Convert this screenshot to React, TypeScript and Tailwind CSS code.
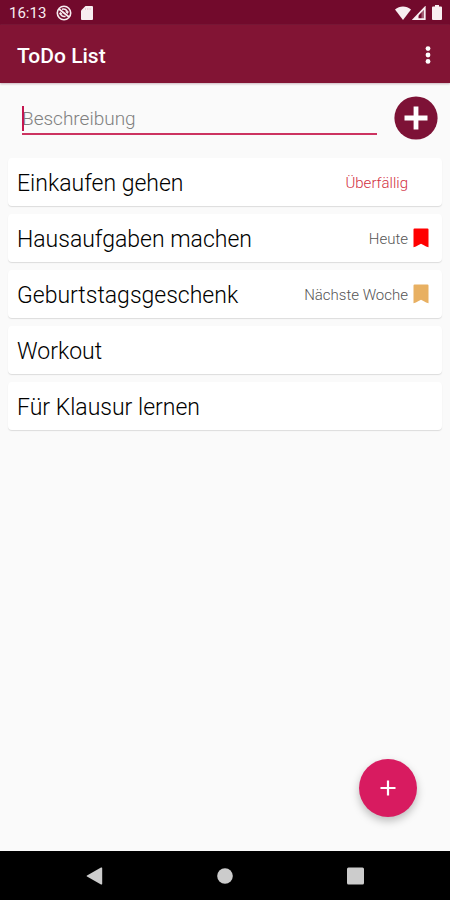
import { useState } from "react";

type Todo = {
	title: string;
	due?: string;
	dueClass?: string;
	flagClass?: string;
};

const todos: Todo[] = [
	{ title: "Einkaufen gehen", due: "Überfällig", dueClass: "text-[#d22f42]" },
	{
		title: "Hausaufgaben machen",
		due: "Heute",
		dueClass: "text-[#555555]",
		flagClass: "text-[#ff0000]",
	},
	{
		title: "Geburtstagsgeschenk",
		due: "Nächste Woche",
		dueClass: "text-[#555555]",
		flagClass: "text-[#e8b062]",
	},
	{ title: "Workout" },
	{ title: "Für Klausur lernen" },
];

function StatusBar() {
	return (
		<div className="flex h-[25px] items-center bg-[#720a2c] pr-2 pl-[9px] text-[#f8eef1]">
			<span className="text-[15px] leading-5">16:13</span>
			{/* Sync disabled */}
			<svg viewBox="0 0 16 16" className="ml-[10px] size-4" fill="none" stroke="currentColor">
				<circle cx="8" cy="8" r="6.7" strokeWidth="1.6" />
				<path d="M3 4 13 12" strokeWidth="1.8" />
				<path d="M6 4.3c2.6-1 5 .4 5.5 3.2M4.3 7.8c.2 2.8 2.7 4.400 5.200 3.500" strokeWidth="1.6" />
				<path d="M9 6.400h4l-1.500 2.600zM2.800 9.200l1.500-2.200 2.500 2.200z" fill="currentColor" stroke="none" />
			</svg>
			{/* SD card */}
			<svg viewBox="0 0 12 14" className="ml-[9px] h-[14px] w-3" fill="currentColor">
				<path d="M4.5 0H11a1 1 0 0 1 1 1v12a1 1 0 0 1-1 1H1a1 1 0 0 1-1-1V4.5z" />
				<path d="M4.5 2v2M6.8 2v2M9.1 2v2" stroke="#e2c3cd" strokeWidth=".8" />
			</svg>
			<svg viewBox="0 0 16 14" className="ml-auto h-[14px] w-4" fill="currentColor">
				<path d="M0 3.4C4.6-.5 11.4-.5 16 3.4L8 14z" />
			</svg>
			<svg viewBox="0 0 14 14" className="ml-px h-[14px] w-[14px]">
				<path d="M12.8 1.6v11.6H1.8z" fill="none" stroke="currentColor" strokeWidth="1.7" />
				<path d="M1 14 6.5 8.300V13z" fill="currentColor" />
				<path d="M9.500 5v8h3.300V1.600z" fill="currentColor" opacity=".35" />
			</svg>
			<svg viewBox="0 0 10 15" className="ml-[6px] h-[15px] w-[10px]" fill="currentColor">
				<path d="M3 0h4v1.5h2a1 1 0 0 1 1 1V14a1 1 0 0 1-1 1H1a1 1 0 0 1-1-1V2.5a1 1 0 0 1 1-1h2z" />
			</svg>
		</div>
	);
}

function TodoCard({ todo }: { todo: Todo }) {
	return (
		<li className="flex h-12 items-center rounded-sm bg-white pr-3 pl-[9px] shadow-[0_1px_1px_#dcdcdc]">
			<span className="flex-1 pt-1 text-[23px] leading-8 font-light text-black">{todo.title}</span>
			{todo.due && (
				<span className={`pt-px text-[15px] leading-5 font-light ${todo.dueClass}`}>
					{todo.due}
				</span>
			)}
			<span className="ml-1 w-[18px]">
				{todo.flagClass && (
					<svg
						viewBox="0 0 18 20"
						className={`h-5 w-[18px] ${todo.flagClass}`}
						fill="currentColor"
					>
						<path d="M2.500 .5h13a1 1 0 0 1 1 1v17.700q-2.500-.6-4.600-1.900L9 15.800 6.100 17.300q-2.100 1.300-4.600 1.900V1.500a1 1 0 0 1 1-1z" />
					</svg>
				)}
			</span>
		</li>
	);
}

export default function App() {
	const [text, setText] = useState("");

	return (
		<div className="relative flex min-h-screen flex-col bg-[#fafafa] font-[Roboto,sans-serif]">
			<StatusBar />

			<header className="flex h-[58px] items-center justify-between bg-[#821434] pr-3 pl-[17px] text-white shadow-[0_1px_2px_#c9b5bc]">
				<h1 className="pt-1 text-[21px] leading-7 font-medium">ToDo List</h1>
				<button type="button" aria-label="Menü" className="flex w-5 justify-center pt-px">
					<svg viewBox="0 0 6 18" className="h-[18px] w-[6px]" fill="currentColor">
						<circle cx="3" cy="2.6" r="2.4" />
						<circle cx="3" cy="9" r="2.4" />
						<circle cx="3" cy="15.4" r="2.4" />
					</svg>
				</button>
			</header>

			<main className="flex-1 px-2 pt-[13px]">
				<form
					className="flex items-center pr-1 pl-[14px]"
					onSubmit={(e) => e.preventDefault()}
				>
					<div className="relative mr-[17px] flex-1 border-b-2 border-[#cc3360]">
						<input
							type="text"
							aria-label="Beschreibung"
							placeholder="Beschreibung"
							value={text}
							onChange={(e) => setText(e.target.value)}
							className="block h-8 w-full pt-[2px] text-[19px] font-light text-[#222222] outline-none placeholder:text-[#808080]"
						/>
						{/* Cursor */}
						<span className="absolute bottom-[2px] left-0 h-[25px] w-[2px] bg-[#c4164f]" />
					</div>
					<button type="submit" aria-label="Hinzufügen" className="size-11">
						<svg viewBox="0 0 44 44" className="size-11">
							<circle cx="22" cy="22" r="21.6" fill="#7d1236" />
							<path d="M22 10.5v23M10.5 22h23" stroke="#ffffff" strokeWidth="4.8" />
						</svg>
					</button>
				</form>

				<ul className="mt-[18px] flex flex-col gap-2">
					{todos.map((todo) => (
						<TodoCard key={todo.title} todo={todo} />
					))}
				</ul>
			</main>

			{/* Floating action button */}
			<button
				type="button"
				aria-label="Neue Aufgabe"
				className="absolute right-[33px] bottom-[83px] flex size-[58px] items-center justify-center rounded-full bg-[#d81b60] text-white shadow-[0_4px_8px_#00000040]"
			>
				<svg viewBox="0 0 16 16" className="size-4" stroke="currentColor" strokeWidth="2.2">
					<path d="M8 .5v15M.5 8h15" />
				</svg>
			</button>

			<nav className="flex h-[49px] items-center justify-between bg-black px-[84px] text-[#cccccc]">
				<button type="button" aria-label="Zurück">
					<svg viewBox="0 0 20 20" className="size-5" fill="currentColor">
						<path d="M17 1.6a.8.8 0 0 1 1.2.7v15.4a.8.8 0 0 1-1.2.7L3 10.6a.7.7 0 0 1 0-1.2z" />
					</svg>
				</button>
				<button type="button" aria-label="Startseite">
					<svg viewBox="0 0 20 20" className="size-5" fill="currentColor">
						<circle cx="10" cy="10" r="7.8" />
					</svg>
				</button>
				<button type="button" aria-label="Übersicht">
					<svg viewBox="0 0 20 20" className="size-5" fill="currentColor">
						<rect x="1" y="1.5" width="17" height="17" rx="1.5" />
					</svg>
				</button>
			</nav>
		</div>
	);
}
